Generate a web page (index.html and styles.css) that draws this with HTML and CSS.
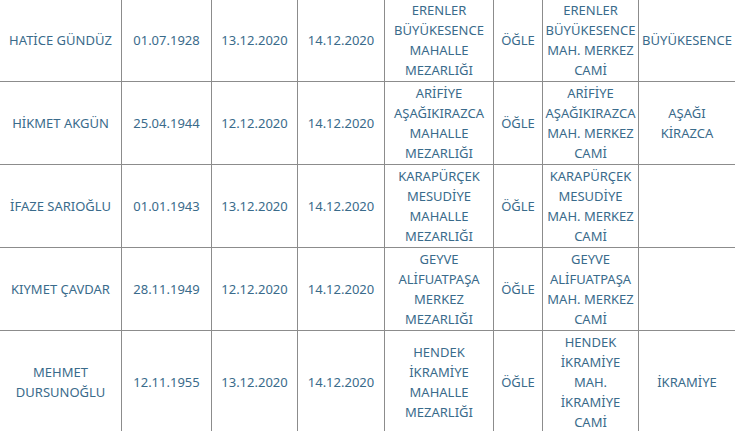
FILE: index.html
```html
<!DOCTYPE html>
<html lang="tr">
<head>
<meta charset="utf-8">
<title>Vefat Listesi</title>
<link rel="stylesheet" href="styles.css">
</head>
<body>
<table class="list">
  <colgroup>
    <col class="c1"><col class="c2"><col class="c3"><col class="c4"><col class="c5"><col class="c6"><col class="c7"><col class="c8">
  </colgroup>
  <tbody>
    <tr class="first">
      <td>HATİCE GÜNDÜZ</td>
      <td>01.07.1928</td>
      <td>13.12.2020</td>
      <td>14.12.2020</td>
      <td>ERENLER BÜYÜKESENCE MAHALLE MEZARLIĞI</td>
      <td>ÖĞLE</td>
      <td>ERENLER BÜYÜKESENCE MAH. MERKEZ CAMİ</td>
      <td class="place">BÜYÜKESENCE</td>
    </tr>
    <tr>
      <td>HİKMET AKGÜN</td>
      <td>25.04.1944</td>
      <td>12.12.2020</td>
      <td>14.12.2020</td>
      <td>ARİFİYE AŞAĞIKIRAZCA MAHALLE MEZARLIĞI</td>
      <td>ÖĞLE</td>
      <td>ARİFİYE AŞAĞIKIRAZCA MAH. MERKEZ CAMİ</td>
      <td class="place">AŞAĞI KİRAZCA</td>
    </tr>
    <tr>
      <td>İFAZE SARIOĞLU</td>
      <td>01.01.1943</td>
      <td>13.12.2020</td>
      <td>14.12.2020</td>
      <td>KARAPÜRÇEK MESUDİYE MAHALLE MEZARLIĞI</td>
      <td>ÖĞLE</td>
      <td>KARAPÜRÇEK MESUDİYE MAH. MERKEZ CAMİ</td>
      <td class="place"></td>
    </tr>
    <tr>
      <td>KIYMET ÇAVDAR</td>
      <td>28.11.1949</td>
      <td>12.12.2020</td>
      <td>14.12.2020</td>
      <td>GEYVE ALİFUATPAŞA MERKEZ MEZARLIĞI</td>
      <td>ÖĞLE</td>
      <td>GEYVE ALİFUATPAŞA MAH. MERKEZ CAMİ</td>
      <td class="place"></td>
    </tr>
    <tr>
      <td>MEHMET DURSUNOĞLU</td>
      <td>12.11.1955</td>
      <td>13.12.2020</td>
      <td>14.12.2020</td>
      <td>HENDEK İKRAMİYE MAHALLE MEZARLIĞI</td>
      <td>ÖĞLE</td>
      <td>HENDEK İKRAMİYE MAH. İKRAMİYE CAMİ</td>
      <td class="place">İKRAMİYE</td>
    </tr>
  </tbody>
</table>
</body>
</html>
```

FILE: styles.css
```css
html, body {
  margin: 0;
  padding: 0;
  background: #ffffff;
}

body {
  width: 735px;
  height: 431px;
  overflow: hidden;
  font-family: "Noto Sans", "Liberation Sans", sans-serif;
  font-size: 13px;
  line-height: 20px;
  color: #3a6b8b;
}

.list {
  width: 735px;
  table-layout: fixed;
  border-collapse: separate;
  border-spacing: 0;
}

.c1 { width: 122px; }
.c2 { width: 90px; }
.c3 { width: 86px; }
.c4 { width: 87px; }
.c5 { width: 109px; }
.c6 { width: 49px; }
.c7 { width: 96px; }
.c8 { width: 96px; }

.list td {
  box-sizing: border-box;
  padding: 1px 0;
  text-align: center;
  vertical-align: middle;
  border-right: 1px solid #8c8c8c;
  border-bottom: 1px solid #8c8c8c;
}

.list td:last-child {
  border-right: none;
}

.list td.place {
  padding-left: 2px;
  padding-right: 2px;
}

.list .first td {
  padding-top: 0;
}
```
